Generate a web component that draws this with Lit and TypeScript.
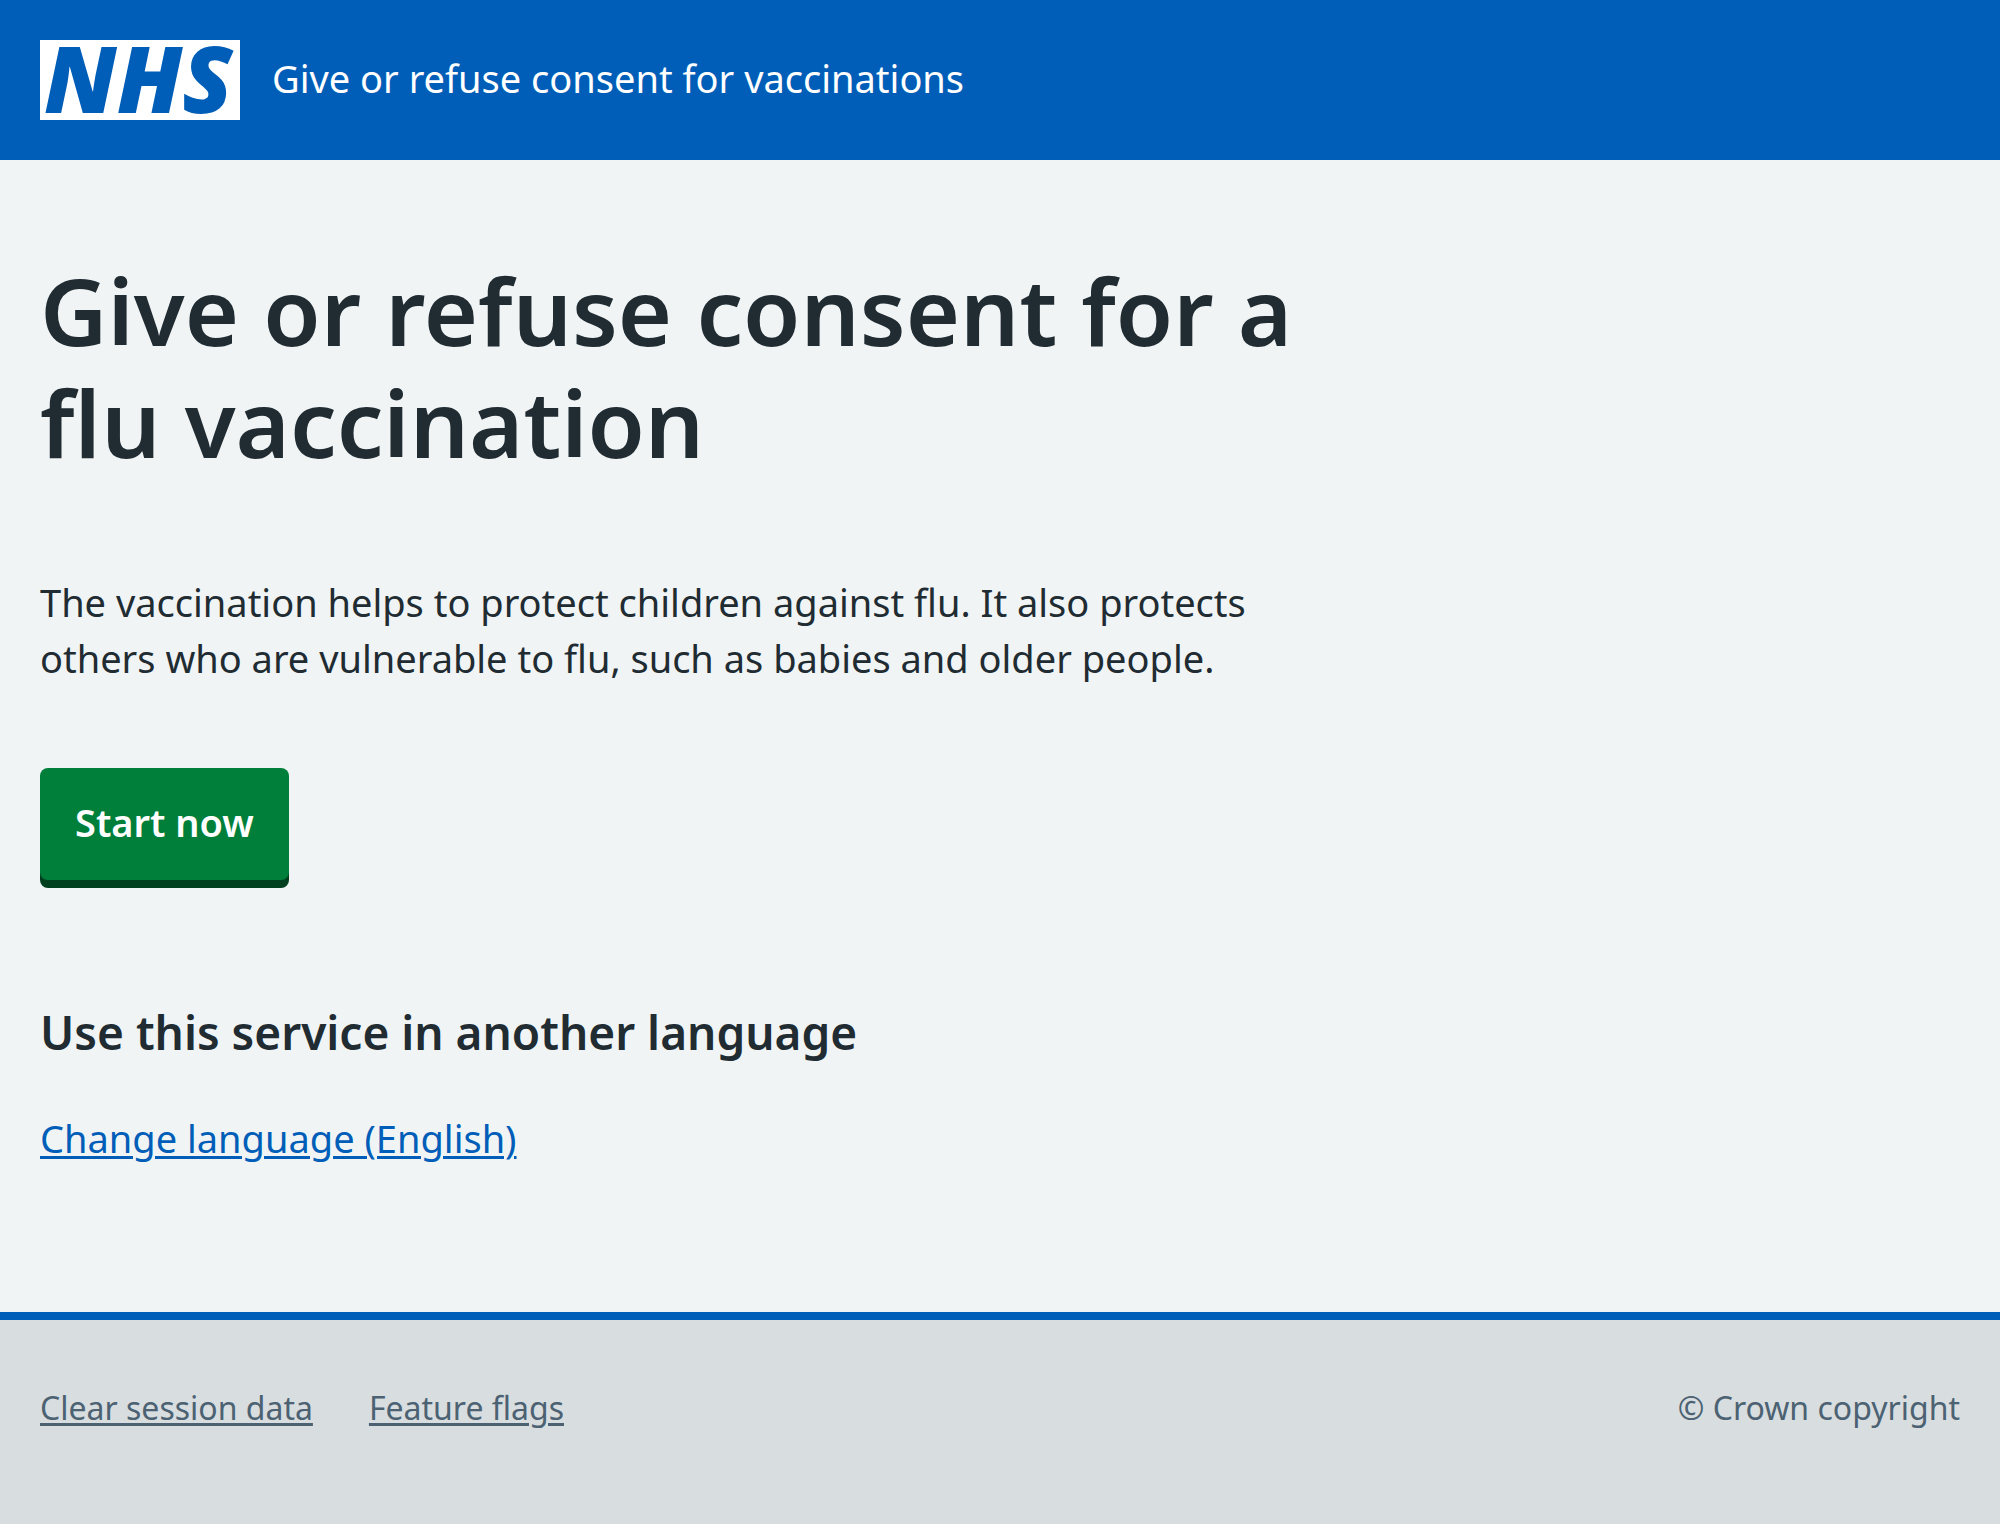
import { LitElement, html, css } from "lit";
import { customElement } from "lit/decorators.js";

@customElement("nhs-logo")
class NhsLogo extends LitElement {
  static styles = css`
    :host {
      display: block;
      flex: none;
    }
    .logo {
      display: block;
      width: 200px;
      height: 80px;
      overflow: visible;
    }
    .plate {
      fill: #ffffff;
    }
    .letters {
      fill: #005eb8;
      font-family: "Open Sans", "Noto Sans", sans-serif;
      font-size: 92px;
      font-style: italic;
      font-weight: 800;
    }
  `;

  render() {
    return html`
      <svg class="logo" viewBox="0 0 200 80" role="img" aria-label="NHS">
        <rect class="plate" width="200" height="80"></rect>
        <text class="letters" x="4" y="73">NHS</text>
      </svg>
    `;
  }
}

@customElement("app-root")
class AppRoot extends LitElement {
  static styles = css`
    :host {
      display: flex;
      flex-direction: column;
      min-height: 100vh;
      background: #f0f4f5;
      color: #212b32;
      font-family: "Noto Sans", "Open Sans", sans-serif;
      font-size: 38px;
      line-height: 56px;
    }
    .header {
      display: flex;
      align-items: center;
      gap: 32px;
      padding: 40px;
      background: #005eb8;
      color: #ffffff;
    }
    .service {
      padding-bottom: 4px;
      color: inherit;
      text-decoration: none;
    }
    .main {
      padding: 94px 40px 146px;
    }
    .column {
      width: 67%;
    }
    .title {
      margin: 0 0 96px;
      font-size: 93px;
      font-weight: 600;
      line-height: 112px;
    }
    .intro {
      margin: 0 0 82px;
    }
    .start {
      display: block;
      margin: 0 0 122px;
      padding: 26px 35px 30px;
      border: 0;
      border-radius: 8px;
      background: #007f3b;
      box-shadow: 0 8px 0 #00401e;
      color: #ffffff;
      font-family: inherit;
      font-size: 38px;
      font-weight: 600;
      line-height: 56px;
      cursor: pointer;
    }
    .subtitle {
      margin: 0 0 48px;
      font-size: 46px;
      font-weight: 600;
      line-height: 60px;
    }
    .language {
      margin: 0;
    }
    .link {
      color: #005eb8;
      text-decoration: underline;
      text-decoration-thickness: 3px;
      text-underline-offset: 3px;
    }
    .footer {
      display: flex;
      flex: 1;
      flex-wrap: wrap;
      align-items: flex-start;
      justify-content: space-between;
      gap: 24px 56px;
      padding: 64px 40px;
      border-top: 8px solid #005eb8;
      background: #d8dde0;
      color: #4c6272;
      font-size: 32px;
      line-height: 48px;
    }
    .links {
      display: flex;
      flex-wrap: wrap;
      gap: 0 56px;
      margin: 0;
      padding: 0;
      list-style: none;
    }
    .footer .link {
      color: inherit;
    }
    .copyright {
      margin: 0;
    }
  `;

  private footerLinks = ["Clear session data", "Feature flags"];

  render() {
    return html`
      <header class="header">
        <nhs-logo></nhs-logo>
        <a class="service" href="#">Give or refuse consent for vaccinations</a>
      </header>
      <main class="main">
        <div class="column">
          <h1 class="title">Give or refuse consent for a flu vaccination</h1>
          <p class="intro">
            The vaccination helps to protect children against flu. It also
            protects others who are vulnerable to flu, such as babies and older
            people.
          </p>
          <button class="start" type="button">Start now</button>
          <h2 class="subtitle">Use this service in another language</h2>
          <p class="language">
            <a class="link" href="#">Change language (English)</a>
          </p>
        </div>
      </main>
      <footer class="footer">
        <ul class="links">
          ${this.footerLinks.map(
            (label) => html`<li><a class="link" href="#">${label}</a></li>`
          )}
        </ul>
        <p class="copyright">© Crown copyright</p>
      </footer>
    `;
  }
}
